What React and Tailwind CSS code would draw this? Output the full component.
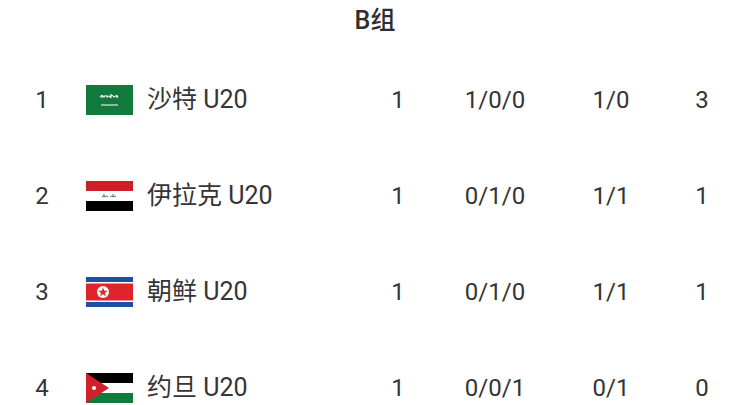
const rows = [
  { rank: 1, flag: 'sa', name: '沙特 U20', played: 1, wdl: '1/0/0', goals: '1/0', pts: 3 },
  { rank: 2, flag: 'iq', name: '伊拉克 U20', played: 1, wdl: '0/1/0', goals: '1/1', pts: 1 },
  { rank: 3, flag: 'kp', name: '朝鲜 U20', played: 1, wdl: '0/1/0', goals: '1/1', pts: 1 },
  { rank: 4, flag: 'jo', name: '约旦 U20', played: 1, wdl: '0/0/1', goals: '0/1', pts: 0 },
]

function Flag({ code }) {
  if (code === 'sa') {
    return (
      <svg viewBox="0 0 47 30" className="h-[30px] w-[47px]">
        <rect width="47" height="30" fill="#137a3e" />
        <path d="M14 12 q2 -3 4 0 q2 -3 3 0 q2 -2 3 0 q2 -3 4 0 q2 -2 4 0 M16 10 v3 M25 9 v4 M31 10 v3" stroke="#fff" strokeWidth="1.1" fill="none" />
        <path d="M15 20 h17" stroke="#fff" strokeWidth="1" />
      </svg>
    )
  }
  if (code === 'iq') {
    return (
      <svg viewBox="0 0 47 30" className="h-[30px] w-[47px]">
        <rect width="47" height="10" fill="#cd1f2a" />
        <rect y="10" width="47" height="10" fill="#fff" />
        <rect y="20" width="47" height="10" fill="#000" />
        <path d="M16 16 q2 -2 3 0 q2 -2 3 0 M24 16 q2 -2 3 0 q2 -2 3 0 M18 13 v3 M27 13 v3" stroke="#1d7a3a" strokeWidth="0.9" fill="none" />
      </svg>
    )
  }
  if (code === 'kp') {
    return (
      <svg viewBox="0 0 47 30" className="h-[30px] w-[47px]">
        <rect width="47" height="30" fill="#1f4fa0" />
        <rect y="5" width="47" height="20" fill="#fff" />
        <rect y="6.5" width="47" height="17" fill="#e0242c" />
        <circle cx="17" cy="15" r="6" fill="#fff" />
        <path d="M17 10.3 L18.2 13.8 L21.9 13.8 L18.9 16 L20 19.5 L17 17.3 L14 19.5 L15.1 16 L12.1 13.8 L15.8 13.8 Z" fill="#e0242c" />
      </svg>
    )
  }
  return (
    <svg viewBox="0 0 47 30" className="h-[30px] w-[47px]">
      <rect width="47" height="10" fill="#000" />
      <rect y="10" width="47" height="10" fill="#fff" />
      <rect y="20" width="47" height="10" fill="#127a3a" />
      <path d="M0 0 L23 15 L0 30 Z" fill="#d2202a" />
      <circle cx="8" cy="15" r="2" fill="#fff" />
    </svg>
  )
}

export default function App() {
  return (
    <div
      className="h-[405px] w-[750px] overflow-hidden bg-white text-[#353535]"
      style={{ fontFamily: 'Roboto, "Noto Sans CJK SC", sans-serif' }}
    >
      <div className="flex h-[52px] items-start justify-center pt-[2px] text-[25px] font-medium text-[#2e2e2e]">
        B组
      </div>
      {rows.map((r) => (
        <div key={r.rank} className="flex h-[96px] items-center text-[24px]">
          <div className="w-[84px] text-center">{r.rank}</div>
          <div className="ml-[2px] flex w-[47px]">
            <Flag code={r.flag} />
          </div>
          <div className="ml-[14px] w-[211px] text-[25px]">{r.name}</div>
          <div className="w-[80px] text-center">{r.played}</div>
          <div className="w-[114px] text-center">{r.wdl}</div>
          <div className="w-[118px] text-center">{r.goals}</div>
          <div className="w-[64px] text-center">{r.pts}</div>
        </div>
      ))}
    </div>
  )
}
